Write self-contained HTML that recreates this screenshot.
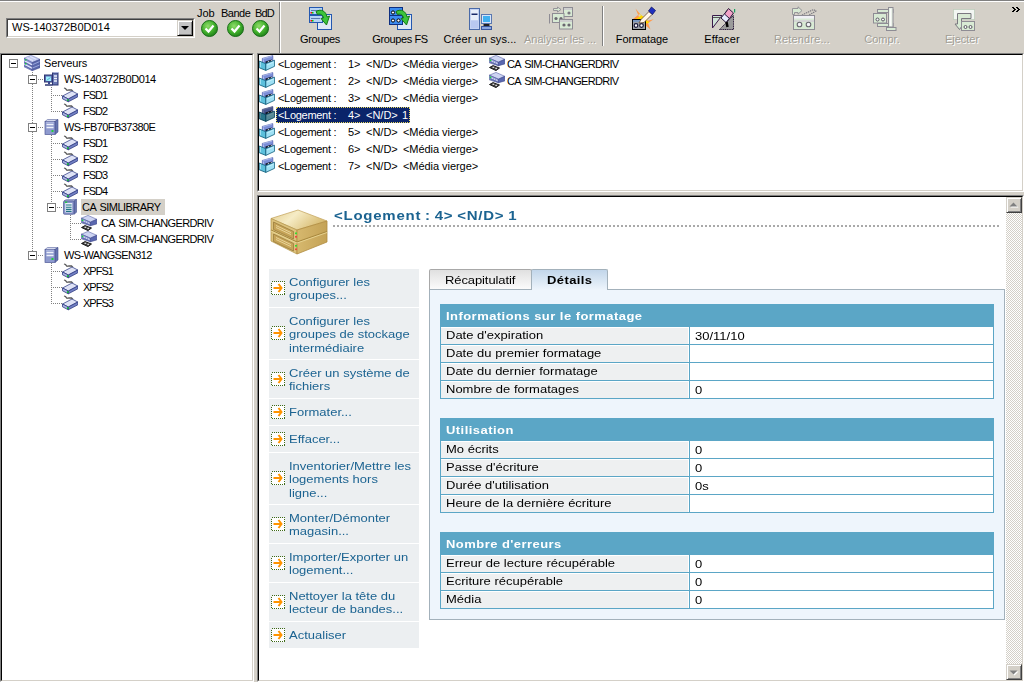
<!DOCTYPE html>
<html><head><meta charset="utf-8">
<style>
*{box-sizing:border-box}
html,body{margin:0;padding:0}
body{width:1024px;height:682px;background:#d4d0c8;position:relative;overflow:hidden;font-family:"Liberation Sans",sans-serif;font-size:11px;color:#000}
.a{position:absolute}
.t{position:absolute;white-space:nowrap;line-height:13px}
.sunk{position:absolute;border-top:1px solid #808080;border-left:1px solid #808080;border-right:1px solid #fff;border-bottom:1px solid #fff}
.sunk>.in{position:absolute;left:0;top:0;right:0;bottom:0;border-top:1px solid #000;border-left:1px solid #000;border-right:1px solid #d4d0c8;border-bottom:1px solid #d4d0c8;background:#fff;overflow:hidden}
.tb{position:absolute;top:33px;letter-spacing:-0.25px;width:100px;text-align:center;line-height:13px}
.dis{color:#a19e96;text-shadow:1px 1px 0 #fff}
.tr{position:absolute;white-space:nowrap;line-height:13px}
.dv{width:1px;background:repeating-linear-gradient(to bottom,#808080 0,#808080 1px,transparent 1px,transparent 2px)}
.dh{height:1px;background:repeating-linear-gradient(to right,#808080 0,#808080 1px,transparent 1px,transparent 2px)}
.mbox{width:9px;height:9px;border:1px solid #808080;background:#fff}
.mbox:after{content:"";position:absolute;left:1px;top:3px;width:5px;height:1px;background:#000}
.btn3{background:#d4d0c8;border-top:1px solid #d4d0c8;border-left:1px solid #d4d0c8;border-right:1px solid #404040;border-bottom:1px solid #404040;box-shadow:inset 1px 1px 0 #fff,inset -1px -1px 0 #808080}
.hd{font-size:15px;font-weight:bold;letter-spacing:0.75px;word-spacing:-1px;color:#1b6391;transform:scaleY(0.85);transform-origin:0 0}
.act{color:#1b6391}
.v.th{font-weight:bold;color:#fff;font-size:13px;letter-spacing:0.45px;transform:scaleY(0.85)}
.v{font-family:"Liberation Sans",sans-serif;font-size:13px;line-height:15px;letter-spacing:0px;transform:scaleY(0.87);transform-origin:0 0}
</style></head>
<body>
<!-- top lines -->
<div class="a" style="left:0;top:0;width:1024px;height:1px;background:#808080"></div>
<div class="a" style="left:0;top:1px;width:1024px;height:1px;background:#fff"></div>

<!-- combo -->
<div class="sunk" style="left:6px;top:18px;width:189px;height:20px">
  <div class="in" style="border-top-color:#404040;border-left-color:#404040">
    <div class="t" style="left:4px;top:1px">WS-140372B0D014</div>
    <div class="a" style="left:169px;top:0;width:16px;height:16px;background:#c4c4c4;border-top:1px solid #d4d0c8;border-left:1px solid #d4d0c8;border-right:1px solid #000;border-bottom:1px solid #000;box-shadow:inset 1px 1px 0 #fff,inset -1px -1px 0 #808080">
      <div class="a" style="left:3px;top:5px;width:0;height:0;border-left:4px solid transparent;border-right:4px solid transparent;border-top:4px solid #000"></div>
    </div>
  </div>
</div>

<!-- status labels -->
<div class="t" style="left:197px;top:7px">Job</div>
<div class="t" style="left:221px;top:7px;letter-spacing:-0.5px">Bande</div>
<div class="t" style="left:255px;top:7px;letter-spacing:-0.8px">BdD</div>
<svg class="a" style="left:201px;top:20px" width="17" height="17" viewBox="0 0 17 17"><defs><radialGradient id="gc" cx="0.4" cy="0.35" r="0.7"><stop offset="0" stop-color="#8fdc6a"/><stop offset="0.6" stop-color="#3fae2a"/><stop offset="1" stop-color="#1d7a18"/></radialGradient></defs><circle cx="8.5" cy="8.5" r="8" fill="url(#gc)" stroke="#1b6e1a" stroke-width="1"/><path d="M4.5 8.5 L7.5 11.5 L12.5 5.5" fill="none" stroke="#fff" stroke-width="2.2"/></svg>
<svg class="a" style="left:227px;top:20px" width="17" height="17" viewBox="0 0 17 17"><circle cx="8.5" cy="8.5" r="8" fill="url(#gc)" stroke="#1b6e1a" stroke-width="1"/><path d="M4.5 8.5 L7.5 11.5 L12.5 5.5" fill="none" stroke="#fff" stroke-width="2.2"/></svg>
<svg class="a" style="left:252px;top:20px" width="17" height="17" viewBox="0 0 17 17"><circle cx="8.5" cy="8.5" r="8" fill="url(#gc)" stroke="#1b6e1a" stroke-width="1"/><path d="M4.5 8.5 L7.5 11.5 L12.5 5.5" fill="none" stroke="#fff" stroke-width="2.2"/></svg>

<!-- toolbar separator -->
<div class="a" style="left:279px;top:2px;width:1px;height:51px;background:#808080"></div>
<div class="a" style="left:280px;top:2px;width:1px;height:51px;background:#fff"></div>
<div class="a" style="left:602px;top:6px;width:1px;height:40px;background:#808080"></div>
<div class="a" style="left:603px;top:6px;width:1px;height:40px;background:#fff"></div>

<!-- toolbar labels -->
<div class="tb" style="left:270px;letter-spacing:-0.3px">Groupes</div>
<div class="tb" style="left:350px;letter-spacing:-0.4px">Groupes FS</div>
<div class="tb" style="left:430px;letter-spacing:0.1px">Créer un sys...</div>
<div class="tb dis" style="left:510px;letter-spacing:0px">Analyser les ...</div>
<div class="tb" style="left:592px;letter-spacing:-0.1px">Formatage</div>
<div class="tb" style="left:672px;letter-spacing:0.1px">Effacer</div>
<div class="tb dis" style="left:752px;letter-spacing:0.15px">Retendre...</div>
<div class="tb dis" style="left:832px;letter-spacing:0px">Compr.</div>
<div class="tb dis" style="left:912px;letter-spacing:0px">Ejecter</div>
<svg class="a" style="left:1012px;top:7px" width="9" height="5" viewBox="0 0 9 5" shape-rendering="crispEdges"><path d="M0 0h2v1h-2zM1 1h2v1h-2zM2 2h2v1h-2zM1 3h2v1h-2zM0 4h2v1h-2z M4 0h2v1h-2zM5 1h2v1h-2zM6 2h2v1h-2zM5 3h2v1h-2zM4 4h2v1h-2z" fill="#000"/></svg>


<!-- tree pane -->
<div class="sunk" style="left:0;top:53px;width:254px;height:629px">
  <div class="in"></div>
</div>

<!-- list pane -->
<div class="sunk" style="left:257px;top:53px;width:767px;height:139px">
  <div class="in"></div>
</div>

<!-- detail pane -->
<div class="sunk" style="left:257px;top:195px;width:767px;height:487px">
  <div class="in"></div>
</div>

<svg width="0" height="0" style="position:absolute">
<defs>
<linearGradient id="gTop" x1="0" y1="0" x2="1" y2="1"><stop offset="0" stop-color="#dfe4f6"/><stop offset="1" stop-color="#9aa6d6"/></linearGradient>
<symbol id="i-srvs" viewBox="0 0 16 16">
 <path d="M0 3.2 L7 0.2 L16 4.3 L8.2 7.6 Z" fill="#c4ccf0" stroke="#6670b0" stroke-width="0.5"/>
 <path d="M0 3.2 L8.2 7.6 L8.2 15.8 L0 11.8 Z" fill="#8c98d4" stroke="#4a5498" stroke-width="0.5"/>
 <path d="M8.2 7.6 L16 4.3 L16 12.7 L8.2 15.8 Z" fill="#5866aa" stroke="#3a4488" stroke-width="0.5"/>
 <path d="M0.5 5.8 L8 9.8 M0.5 9.2 L8 13.2" stroke="#e4e8fc" stroke-width="1.2"/>
 <path d="M0.5 7.3 L8 11.3 M0.5 10.7 L8 14.7" stroke="#4a5498" stroke-width="0.8"/>
 <path d="M8.6 9.6 L15.6 6.6 M8.6 13 L15.6 10" stroke="#9aa6dc" stroke-width="1"/>
 <path d="M3 2.8 L9 5.6 M6 1.5 L12 4.2" stroke="#e8ecfc" stroke-width="0.8"/>
 <rect x="1" y="4.2" width="1.4" height="1.4" fill="#12d030"/><rect x="1" y="8.1" width="1.4" height="1.4" fill="#12d030"/>
</symbol>
<symbol id="i-ws" viewBox="0 0 16 16"><g transform="translate(0,-1.5)">
 <rect x="9.5" y="3.5" width="5.5" height="12" fill="#6a78b4" stroke="#2c3672" stroke-width="1"/>
 <path d="M10 3.5 L11 2.5 H16 L15 3.5 Z" fill="#a8b2dc"/>
 <path d="M11 6.5 H14 M11 9 H14 M11 11.5 H14" stroke="#eef2fc" stroke-width="1.3"/>
 <rect x="1.5" y="5.5" width="8" height="7" fill="#5a68ac" stroke="#2c3672" stroke-width="1"/>
 <rect x="3" y="7" width="5" height="4.5" fill="#9ef0ff"/>
 <path d="M3.5 11 L7.5 8" stroke="#5ab0c8" stroke-width="1"/>
 <path d="M2 15.5 H9.5" stroke="#2c3672" stroke-width="1.5"/><rect x="5" y="12.5" width="2" height="2" fill="#3a4890"/>
</g></symbol>
<symbol id="i-tower" viewBox="0 0 16 16">
 <path d="M2 2.5 L4.5 0.5 L15 0.5 L12 2.5 Z" fill="#d4d9ee" stroke="#5a66a0" stroke-width="0.6"/>
 <path d="M12 2.5 L15 0.5 L15 13 L12 15.5 Z" fill="#6574b0" stroke="#48538f" stroke-width="0.6"/>
 <rect x="2" y="2.5" width="10" height="13" fill="#8e9ace" stroke="#4d5895" stroke-width="0.7"/>
 <path d="M3 3.2 H11" stroke="#c4ccec" stroke-width="0.8"/>
 <path d="M3.5 5.5 H10.5 M3.5 8.5 H10.5" stroke="#eef1fb" stroke-width="1.4"/>
 <rect x="8.5" y="11" width="2" height="2" fill="#1fcf3a"/>
</symbol>
<symbol id="i-drv" viewBox="0 0 16 16">
 <path d="M2 1 L3.5 1.5 L5 3.3 L7 2.8 L9.5 3 L11 4.5" fill="none" stroke="#5a5a5a" stroke-width="1.3"/>
 <path d="M0.5 9 L10 4 L15.8 7 L6.3 12 Z" fill="#dfe3f6" stroke="#3a468c" stroke-width="0.8"/>
 <path d="M0.5 9 L6.3 12 L6.3 14.8 L0.5 11.8 Z" fill="#aab4e2" stroke="#2e3a80" stroke-width="0.8"/>
 <path d="M6.3 12 L15.8 7 L15.8 9.8 L6.3 14.8 Z" fill="#7280c4" stroke="#2e3a80" stroke-width="0.8"/>
 <rect x="5" y="12.2" width="1.6" height="1.8" fill="#10c030"/>
</symbol>
<symbol id="i-lib" viewBox="0 0 16 16">
 <path d="M2 2 L4.5 0.3 L14.5 0.3 L12 2 Z" fill="#c6cdea" stroke="#5a66a0" stroke-width="0.6"/>
 <path d="M12 2 L14.5 0.3 L14.5 13.3 L12 15.3 Z" fill="#6a78b2" stroke="#48538f" stroke-width="0.6"/>
 <rect x="1.5" y="2" width="10.5" height="13.3" rx="1" fill="#8693c8" stroke="#4d5895" stroke-width="0.7"/>
 <rect x="3.3" y="4" width="7" height="9.5" fill="#e8eef8"/>
 <path d="M4 6 H9.6 M4 8.2 H9.6 M4 10.4 H9.6 M4 12.4 H9.6" stroke="#1f7484" stroke-width="1.1"/>
 <rect x="2.8" y="2.6" width="2.4" height="1.3" fill="#1fcf3a"/>
</symbol>
<symbol id="i-chg" viewBox="0 0 16 16">
 <path d="M0.3 3.2 L7 0.4 L15.8 4.3 L9.4 7.2 Z" fill="#cdd4f2" stroke="#5a64a8" stroke-width="0.6"/>
 <path d="M0.3 3.2 L9.4 7.2 L9.4 10.8 L0.3 7.8 Z" fill="#8e9ad2" stroke="#4a5498" stroke-width="0.6"/>
 <path d="M9.4 7.2 L15.8 4.3 L15.8 8.9 L9.4 10.8 Z" fill="#5a68b0" stroke="#3a4488" stroke-width="0.6"/>
 <path d="M2.5 5.8 L8.8 8.6" stroke="#eef0fc" stroke-width="1" stroke-dasharray="1.5 1"/>
 <path d="M1 6.8 L8.8 10" stroke="#4a5498" stroke-width="0.7"/>
 <rect x="0.8" y="4.6" width="1.5" height="1.5" fill="#10e030"/>
 <path d="M0.5 12.5 L4 10.6 L10.5 13 L7 15.6 Z" fill="#3a3a3a" stroke="#111" stroke-width="0.9" stroke-linejoin="round"/>
 <rect x="3.5" y="11.6" width="1.8" height="1.4" fill="#d8d8d8"/><rect x="6.3" y="12.7" width="1.8" height="1.4" fill="#d8d8d8"/>
</symbol>
<symbol id="i-slot" viewBox="0 0 16 16">
 <path d="M3.3 3.4 L13.8 0.6 L14 6 L6.2 8.7 L6.2 12.5 L3.3 11.3 Z" fill="#7c8ed8" stroke="#4a58a8" stroke-width="0.6"/>
 <path d="M4.2 3.6 L13 1.2 M4.5 4.5 L4.5 11" stroke="#b8c4f0" stroke-width="0.8"/>
 <path d="M6.5 6.5 L12.8 4.4 L12.8 6.2 L6.5 8.3 Z" fill="#101828"/>
 <rect x="8.8" y="6.2" width="1.4" height="1.2" fill="#e8e8e8"/><rect x="11.8" y="5.1" width="1.4" height="1.2" fill="#c8c8c8"/>
 <path d="M0.3 6 L6.8 8.7 L6.8 15.4 L0.3 12.8 Z" fill="#5cc0dc" stroke="#0d5a78" stroke-width="0.8"/>
 <path d="M6.8 8.7 L15.6 5.2 L15.6 11.3 L6.8 15.4 Z" fill="#9ee0f4" stroke="#0d5a78" stroke-width="0.8"/>
 <path d="M1.3 7 L1.3 12.2 M8 10 L14.5 7.2" stroke="#c8f2fc" stroke-width="0.8"/>
</symbol>
</defs></svg>

<!-- Groupes -->
<svg class="a" style="left:308px;top:6px" width="24" height="24" viewBox="0 0 24 24">
 <rect x="9.5" y="8.5" width="14" height="15" fill="#dfe8f6" stroke="#2458b0"/>
 <rect x="1.5" y="1.5" width="13" height="7" fill="#b8d4f4" stroke="#2458b0"/>
 <rect x="1.5" y="9.5" width="13" height="7" fill="#b8d4f4" stroke="#2458b0"/>
 <path d="M3 4.5 H12 M3 12.5 H12" stroke="#5a7ab0" stroke-width="1"/>
 <rect x="2.5" y="6" width="1.5" height="1.5" fill="#f00"/><rect x="4" y="6" width="1.5" height="1.5" fill="#0c0"/>
 <rect x="2.5" y="14" width="1.5" height="1.5" fill="#f00"/><rect x="4" y="14" width="1.5" height="1.5" fill="#0c0"/>
 <path d="M8 5.5 C13 2.5 18 5 19 11 L21.5 10 L18.5 19 L13 12.5 L15.5 12 C15 8.5 12 7.5 9.5 8.5 Z" fill="#3cc43c" stroke="#157a15" stroke-width="1"/>
</svg>
<!-- Groupes FS -->
<svg class="a" style="left:388px;top:6px" width="24" height="24" viewBox="0 0 24 24">
 <rect x="9.5" y="8.5" width="14" height="15" fill="#dfe8f6" stroke="#2458b0"/>
 <rect x="1.5" y="1.5" width="13" height="8" fill="#3c8cf0" stroke="#0e2f80"/>
 <rect x="1.5" y="9.5" width="13" height="9" fill="#3c8cf0" stroke="#0e2f80"/>
 <circle cx="5" cy="6.5" r="1.6" fill="#fff" stroke="#000"/><circle cx="10.5" cy="6.5" r="1.6" fill="#fff" stroke="#000"/>
 <circle cx="5" cy="14.5" r="1.6" fill="#fff" stroke="#000"/><circle cx="10.5" cy="14.5" r="1.6" fill="#fff" stroke="#000"/>
 <path d="M8 5.5 C13 2.5 18 5 19 11 L21.5 10 L18.5 19 L13 12.5 L15.5 12 C15 8.5 12 7.5 9.5 8.5 Z" fill="#3cc43c" stroke="#157a15" stroke-width="1"/>
</svg>
<!-- Créer -->
<svg class="a" style="left:468px;top:6px" width="24" height="24" viewBox="0 0 24 24">
 <rect x="1.5" y="2.5" width="10" height="21" fill="#c4d2f2" stroke="#4a6aa8"/>
 <rect x="3" y="4" width="7" height="10" fill="#e8eefa"/>
 <rect x="3.5" y="7.5" width="6" height="1.5" fill="#1a2a6a"/>
 <rect x="3" y="15" width="7" height="7" fill="#b8c8f0"/>
 <rect x="13.5" y="8.5" width="10" height="9" fill="#d8e4f8" stroke="#5a78b0"/>
 <rect x="15" y="10" width="7" height="6" fill="#40b0f0"/>
 <rect x="15.5" y="18" width="6" height="2" fill="#222"/>
 <rect x="13.5" y="20.5" width="10" height="3" fill="#8aa8e0" stroke="#3a58a0"/>
</svg>
<!-- Analyser (disabled) -->
<svg class="a" style="left:548px;top:6px" width="26" height="24" viewBox="0 0 26 24">
 <rect x="15.5" y="1.5" width="9" height="9" fill="#d8ead4" stroke="#8e8c94"/>
 <path d="M16 3 H24" stroke="#c0a8c8" stroke-width="0.8"/>
 <circle cx="21" cy="7" r="1.6" fill="#7a7880"/>
 <rect x="4.5" y="7.5" width="11.5" height="9" fill="#d8ead4" stroke="#8e8c94"/>
 <circle cx="8" cy="12.5" r="1.6" fill="#6a6870"/><circle cx="13" cy="12.5" r="1.6" fill="#6a6870"/>
 <rect x="11.5" y="13.5" width="13" height="9.5" fill="#d8ead4" stroke="#8e8c94"/>
 <path d="M12 15 H24" stroke="#c0a8c8" stroke-width="0.8"/>
 <circle cx="16" cy="19" r="1.6" fill="#6a6870"/><circle cx="21" cy="19" r="1.6" fill="#6a6870"/>
 <path d="M5.5 2.5 H9.5 V1 L13 3.5 L9.5 6 V4.5 H5.5 Z" fill="#d8ead4" stroke="#8e8c94" stroke-width="0.9"/>
 <path d="M1.5 8 V17.5" stroke="#8e8c94" stroke-width="1"/>
</svg>
<!-- Formatage -->
<svg class="a" style="left:632px;top:6px" width="24" height="24" viewBox="0 0 24 24">
 <path d="M3.5 2.5 L8 8 L6 9 L1 13 L7 13.5 L10 16 L14 15 L21.8 13.2 L16 17 L18.5 23.6 L13 19 L10 18 Z" fill="#ff9a50"/>
 <path d="M5.5 6 L9 9.5 L4 13 L9 14 L13 17.5 L17.5 17 L14.5 13.5 L16 10 L11 10.5 Z" fill="#ffd800"/>
 <rect x="0.5" y="13.5" width="13" height="10" fill="#9ca0a4" stroke="#000"/>
 <rect x="1" y="14" width="12" height="2" fill="#7a98c0"/>
 <circle cx="4" cy="19.5" r="1.8" fill="#fff" stroke="#1a1a3a" stroke-width="1.2"/><circle cx="9.5" cy="19.5" r="1.8" fill="#fff" stroke="#1a1a3a" stroke-width="1.2"/>
 <path d="M7 17 L9 13.5 L17 5.5 L20 8.5 L12 16.5 Z" fill="#fff6ea" stroke="#6a4a2a" stroke-width="0.8"/>
 <path d="M16.5 5 L19.5 1 L23.5 4.5 L20.5 8.5 Z" fill="#2030c0" stroke="#10186a" stroke-width="0.8"/>
</svg>
<!-- Effacer -->
<svg class="a" style="left:710px;top:6px" width="26" height="24" viewBox="0 0 26 24">
 <path d="M2.5 9.5 H12 L2.5 22 Z" fill="#d0e4d8" stroke="#3a1a4a"/>
 <path d="M3 11.5 H11" stroke="#555"/>
 <path d="M9.5 23.5 L23.5 23.5 V9.5 Z" fill="#9a9a9a" stroke="#2a1a3a" stroke-dasharray="1.2 0.6"/>
 <path d="M11 12 L17.5 4 L22.5 8.5 L16 16.5 Z" fill="#e6ecff" stroke="#2a1a3a"/>
 <path d="M14.5 8 L18.5 2.5 L23.5 7 L19.5 12.5 Z" fill="#f2a2c8" stroke="#2a1a3a"/>
 <path d="M16.5 16 L17.5 21" stroke="#000" stroke-width="2.5"/>
 <rect x="24" y="3" width="1.2" height="3.5" fill="#18a060"/>
</svg>
<!-- Retendre (disabled) -->
<svg class="a" style="left:790px;top:6px" width="27" height="24" viewBox="0 0 27 24">
 <path d="M2.5 2.5 H8 V0.8 L12 4.5 L8 8.2 V6.5 H4.5 V8.5 H2.5 Z" fill="#d8ead4" stroke="#8e8c94" stroke-width="0.9"/>
 <path d="M12 9 L23.5 3.5 L26 5 L19 9" fill="none" stroke="#7a7880" stroke-width="1.1" stroke-dasharray="1.4 0.8"/>
 <rect x="3.5" y="9.5" width="21" height="14" fill="#d8ead4" stroke="#8e8c94"/>
 <rect x="4" y="10" width="20" height="2.5" fill="#f0f0f6"/>
 <path d="M4 15 H24" stroke="#d0b8d8" stroke-width="0.8"/>
 <circle cx="9.5" cy="18.5" r="2.3" fill="#f4f4f8" stroke="#6a6870" stroke-width="1.1"/><circle cx="18.5" cy="18.5" r="2.3" fill="#f4f4f8" stroke="#6a6870" stroke-width="1.1"/>
</svg>
<!-- Compr (disabled) -->
<svg class="a" style="left:870px;top:6px" width="27" height="26" viewBox="0 0 27 26">
 <rect x="7.5" y="3.5" width="15.5" height="3" fill="#d8ead4" stroke="#8e8c94"/>
 <rect x="7.5" y="17.5" width="15.5" height="3" fill="#d8ead4" stroke="#8e8c94"/>
 <rect x="3.5" y="7.5" width="13" height="9.5" fill="#d8ead4" stroke="#8e8c94"/>
 <circle cx="7.5" cy="13.5" r="1.5" fill="#f4f4f8" stroke="#5a5860"/><circle cx="13" cy="13.5" r="1.5" fill="#f4f4f8" stroke="#5a5860"/>
 <rect x="18.5" y="1.5" width="4.5" height="19.5" fill="#e8f0e6" stroke="#8e8c94"/>
 <path d="M20.7 3 V20" stroke="#fff" stroke-width="1"/>
 <rect x="16.5" y="21.5" width="9.5" height="3" fill="#d8ead4" stroke="#8e8c94"/>
</svg>
<!-- Ejecter (disabled) -->
<svg class="a" style="left:952px;top:7px" width="24" height="24" viewBox="0 0 24 24">
 <rect x="1.5" y="2.5" width="21" height="10" fill="#f2f6f2" stroke="#a8c0a8" stroke-dasharray="1 1"/>
 <path d="M5.5 17 V6.5 H19 V11.5 H9.5 V17 H11.5 L7.5 22.5 L3 17 Z" fill="#d8ead4" stroke="#7a7880"/>
 <rect x="9.5" y="14.5" width="13" height="9" fill="#d8ead4" stroke="#8e8c94"/>
 <circle cx="13.5" cy="20" r="1.5" fill="#f4f4f8" stroke="#5a5860"/><circle cx="18.5" cy="20" r="1.5" fill="#f4f4f8" stroke="#5a5860"/>
</svg>

<div class="a dv" style="left:32px;top:72px;height:184px"></div>
<div class="a dv" style="left:51px;top:87px;height:25px"></div>
<div class="a dv" style="left:51px;top:135px;height:73px"></div>
<div class="a dv" style="left:51px;top:263px;height:41px"></div>
<div class="a dv" style="left:70px;top:215px;height:25px"></div>
<div class="a dh" style="left:32px;top:79px;width:11px"></div>
<div class="a dh" style="left:51px;top:95px;width:11px"></div>
<div class="a dh" style="left:51px;top:111px;width:11px"></div>
<div class="a dh" style="left:32px;top:127px;width:11px"></div>
<div class="a dh" style="left:51px;top:143px;width:11px"></div>
<div class="a dh" style="left:51px;top:159px;width:11px"></div>
<div class="a dh" style="left:51px;top:175px;width:11px"></div>
<div class="a dh" style="left:51px;top:191px;width:11px"></div>
<div class="a dh" style="left:51px;top:207px;width:11px"></div>
<div class="a dh" style="left:70px;top:223px;width:11px"></div>
<div class="a dh" style="left:70px;top:239px;width:11px"></div>
<div class="a dh" style="left:32px;top:255px;width:11px"></div>
<div class="a dh" style="left:51px;top:271px;width:11px"></div>
<div class="a dh" style="left:51px;top:287px;width:11px"></div>
<div class="a dh" style="left:51px;top:303px;width:11px"></div>
<div class="a mbox" style="left:9px;top:59px"></div>
<svg class="a" style="left:24px;top:55px" width="16" height="16"><use href="#i-srvs"/></svg>
<div class="tr" style="left:44px;top:57px;letter-spacing:-0.1px;word-spacing:0px">Serveurs</div>
<div class="a mbox" style="left:28px;top:75px"></div>
<svg class="a" style="left:43px;top:71px" width="16" height="16"><use href="#i-ws"/></svg>
<div class="tr" style="left:64px;top:73px;letter-spacing:-0.4px;word-spacing:0px">WS-140372B0D014</div>
<svg class="a" style="left:62px;top:87px" width="16" height="16"><use href="#i-drv"/></svg>
<div class="tr" style="left:83px;top:89px;letter-spacing:-1.0px;word-spacing:0px">FSD1</div>
<svg class="a" style="left:62px;top:103px" width="16" height="16"><use href="#i-drv"/></svg>
<div class="tr" style="left:83px;top:105px;letter-spacing:-1.0px;word-spacing:0px">FSD2</div>
<div class="a mbox" style="left:28px;top:123px"></div>
<svg class="a" style="left:43px;top:119px" width="16" height="16"><use href="#i-tower"/></svg>
<div class="tr" style="left:64px;top:121px;letter-spacing:-0.55px;word-spacing:0px">WS-FB70FB37380E</div>
<svg class="a" style="left:62px;top:135px" width="16" height="16"><use href="#i-drv"/></svg>
<div class="tr" style="left:83px;top:137px;letter-spacing:-1.0px;word-spacing:0px">FSD1</div>
<svg class="a" style="left:62px;top:151px" width="16" height="16"><use href="#i-drv"/></svg>
<div class="tr" style="left:83px;top:153px;letter-spacing:-1.0px;word-spacing:0px">FSD2</div>
<svg class="a" style="left:62px;top:167px" width="16" height="16"><use href="#i-drv"/></svg>
<div class="tr" style="left:83px;top:169px;letter-spacing:-1.0px;word-spacing:0px">FSD3</div>
<svg class="a" style="left:62px;top:183px" width="16" height="16"><use href="#i-drv"/></svg>
<div class="tr" style="left:83px;top:185px;letter-spacing:-1.0px;word-spacing:0px">FSD4</div>
<div class="a mbox" style="left:47px;top:203px"></div>
<svg class="a" style="left:62px;top:199px" width="16" height="16"><use href="#i-lib"/></svg>
<div class="a" style="left:81px;top:199px;width:84px;height:16px;background:#d4d0c8"></div>
<div class="tr" style="left:82px;top:201px;letter-spacing:-0.55px;word-spacing:1.5px">CA SIMLIBRARY</div>
<svg class="a" style="left:81px;top:215px" width="16" height="16"><use href="#i-chg"/></svg>
<div class="tr" style="left:101px;top:217px;letter-spacing:-0.64px;word-spacing:1.5px">CA SIM-CHANGERDRIV</div>
<svg class="a" style="left:81px;top:231px" width="16" height="16"><use href="#i-chg"/></svg>
<div class="tr" style="left:101px;top:233px;letter-spacing:-0.64px;word-spacing:1.5px">CA SIM-CHANGERDRIV</div>
<div class="a mbox" style="left:28px;top:251px"></div>
<svg class="a" style="left:43px;top:247px" width="16" height="16"><use href="#i-tower"/></svg>
<div class="tr" style="left:64px;top:249px;letter-spacing:-0.66px;word-spacing:0px">WS-WANGSEN312</div>
<svg class="a" style="left:62px;top:263px" width="16" height="16"><use href="#i-drv"/></svg>
<div class="tr" style="left:83px;top:265px;letter-spacing:-1.0px;word-spacing:0px">XPFS1</div>
<svg class="a" style="left:62px;top:279px" width="16" height="16"><use href="#i-drv"/></svg>
<div class="tr" style="left:83px;top:281px;letter-spacing:-1.0px;word-spacing:0px">XPFS2</div>
<svg class="a" style="left:62px;top:295px" width="16" height="16"><use href="#i-drv"/></svg>
<div class="tr" style="left:83px;top:297px;letter-spacing:-1.0px;word-spacing:0px">XPFS3</div>
<svg class="a" style="left:259px;top:55px;" width="16" height="16"><use href="#i-slot"/></svg>
<div class="tr" style="left:278px;top:58px;letter-spacing:-0.3px">&lt;Logement :</div>
<div class="tr" style="left:348px;top:58px;">1&gt;</div>
<div class="tr" style="left:366px;top:58px;">&lt;N/D&gt;</div>
<div class="tr" style="left:403px;top:58px;letter-spacing:-0.05px">&lt;Média vierge&gt;</div>
<svg class="a" style="left:489px;top:55px" width="16" height="16"><use href="#i-chg"/></svg>
<div class="tr" style="left:507px;top:58px;letter-spacing:-0.68px;word-spacing:1.5px">CA SIM-CHANGERDRIV</div>
<svg class="a" style="left:259px;top:72px;" width="16" height="16"><use href="#i-slot"/></svg>
<div class="tr" style="left:278px;top:75px;letter-spacing:-0.3px">&lt;Logement :</div>
<div class="tr" style="left:348px;top:75px;">2&gt;</div>
<div class="tr" style="left:366px;top:75px;">&lt;N/D&gt;</div>
<div class="tr" style="left:403px;top:75px;letter-spacing:-0.05px">&lt;Média vierge&gt;</div>
<svg class="a" style="left:489px;top:72px" width="16" height="16"><use href="#i-chg"/></svg>
<div class="tr" style="left:507px;top:75px;letter-spacing:-0.68px;word-spacing:1.5px">CA SIM-CHANGERDRIV</div>
<svg class="a" style="left:259px;top:89px;" width="16" height="16"><use href="#i-slot"/></svg>
<div class="tr" style="left:278px;top:92px;letter-spacing:-0.3px">&lt;Logement :</div>
<div class="tr" style="left:348px;top:92px;">3&gt;</div>
<div class="tr" style="left:366px;top:92px;">&lt;N/D&gt;</div>
<div class="tr" style="left:403px;top:92px;letter-spacing:-0.05px">&lt;Média vierge&gt;</div>
<svg class="a" style="left:259px;top:106px;filter:brightness(0.6) saturate(1.3)" width="16" height="16"><use href="#i-slot"/></svg>
<div class="a" style="left:276px;top:107px;width:134px;height:16px;background:#0a246a;outline:1px dotted #e8d860;outline-offset:-1px"></div>
<div class="tr" style="left:278px;top:109px;color:#fff;letter-spacing:-0.3px">&lt;Logement :</div>
<div class="tr" style="left:348px;top:109px;color:#fff;">4&gt;</div>
<div class="tr" style="left:366px;top:109px;color:#fff;">&lt;N/D&gt;</div>
<div class="tr" style="left:402px;top:109px;color:#fff;">1</div>
<svg class="a" style="left:259px;top:123px;" width="16" height="16"><use href="#i-slot"/></svg>
<div class="tr" style="left:278px;top:126px;letter-spacing:-0.3px">&lt;Logement :</div>
<div class="tr" style="left:348px;top:126px;">5&gt;</div>
<div class="tr" style="left:366px;top:126px;">&lt;N/D&gt;</div>
<div class="tr" style="left:403px;top:126px;letter-spacing:-0.05px">&lt;Média vierge&gt;</div>
<svg class="a" style="left:259px;top:140px;" width="16" height="16"><use href="#i-slot"/></svg>
<div class="tr" style="left:278px;top:143px;letter-spacing:-0.3px">&lt;Logement :</div>
<div class="tr" style="left:348px;top:143px;">6&gt;</div>
<div class="tr" style="left:366px;top:143px;">&lt;N/D&gt;</div>
<div class="tr" style="left:403px;top:143px;letter-spacing:-0.05px">&lt;Média vierge&gt;</div>
<svg class="a" style="left:259px;top:157px;" width="16" height="16"><use href="#i-slot"/></svg>
<div class="tr" style="left:278px;top:160px;letter-spacing:-0.3px">&lt;Logement :</div>
<div class="tr" style="left:348px;top:160px;">7&gt;</div>
<div class="tr" style="left:366px;top:160px;">&lt;N/D&gt;</div>
<div class="tr" style="left:403px;top:160px;letter-spacing:-0.05px">&lt;Média vierge&gt;</div>
<div class="a" style="left:1006px;top:213px;width:16px;height:451px;background-color:#fff;background-image:linear-gradient(45deg,#d4d0c8 25%,transparent 25%,transparent 75%,#d4d0c8 75%),linear-gradient(45deg,#d4d0c8 25%,transparent 25%,transparent 75%,#d4d0c8 75%);background-size:2px 2px;background-position:0 0,1px 1px"></div>
<div class="a btn3" style="left:1006px;top:197px;width:16px;height:16px"><svg class="a" style="left:-1px;top:-1px" width="16" height="16" viewBox="0 0 16 16"><polygon points="3.5,9.5 7.5,5.5 11.5,9.5" fill="#fff" transform="translate(1,1)"/><polygon points="3.5,9.5 7.5,5.5 11.5,9.5" fill="#808080"/></svg></div>
<div class="a btn3" style="left:1006px;top:664px;width:16px;height:16px"><svg class="a" style="left:-1px;top:-1px" width="16" height="16" viewBox="0 0 16 16"><polygon points="3.5,6.5 7.5,10.5 11.5,6.5" fill="#fff" transform="translate(1,1)"/><polygon points="3.5,6.5 7.5,10.5 11.5,6.5" fill="#808080"/></svg></div>
<svg class="a" style="left:270px;top:209px" width="58" height="46" viewBox="0 0 58 46">
<defs><linearGradient id="gt" x1="0" y1="0" x2="1" y2="0.4"><stop offset="0" stop-color="#e2cc8c"/><stop offset="0.45" stop-color="#f6ecc6"/><stop offset="1" stop-color="#d8bc72"/></linearGradient>
<linearGradient id="gr" x1="0" y1="0" x2="1" y2="0"><stop offset="0" stop-color="#d6b86e"/><stop offset="1" stop-color="#c4a255"/></linearGradient></defs>
<path d="M1 9.5 L28 1 L57 12 L27 21 Z" fill="url(#gt)" stroke="#c8aa66" stroke-width="0.8"/>
<path d="M1 9.5 L27 21 L27 45 L1 32 Z" fill="#dcc27c" stroke="#b89a52" stroke-width="0.8"/>
<path d="M27 21 L57 12 L57 33 L27 45 Z" fill="url(#gr)" stroke="#b08c40" stroke-width="0.8"/>
<path d="M1 21 L27 33 L57 22.5" fill="none" stroke="#a8883e" stroke-width="1.2"/>
<path d="M1 22 L27 34 L57 23.5" fill="none" stroke="#eedc9c" stroke-width="0.8"/>
<path d="M3.5 13 L23.5 22.5 L23.5 30 L3.5 20.5 Z" fill="#c6a458" stroke="#9a7c3c" stroke-width="0.8"/>
<path d="M3.5 25 L23.5 34.5 L23.5 42 L3.5 32.5 Z" fill="#c6a458" stroke="#9a7c3c" stroke-width="0.8"/>
<path d="M6 16.5 L21 23.6 M6 18.5 L21 25.6 M6 28.5 L21 35.6 M6 30.5 L21 37.6" stroke="#ecd89e" stroke-width="0.9"/>
<rect x="25" y="23.5" width="2" height="1.6" fill="#3d3"/><rect x="25" y="27" width="2" height="1.6" fill="#e44"/>
<rect x="25" y="36" width="2" height="1.6" fill="#3d3"/><rect x="25" y="39.5" width="2" height="1.6" fill="#e44"/>
</svg>
<div class="t hd" style="left:334px;top:210px">&lt;Logement : 4&gt; &lt;N/D&gt; 1</div>
<div class="a" style="left:333px;top:225px;width:668px;height:2px;background:repeating-linear-gradient(to right,#a9a9a9 0,#a9a9a9 2px,transparent 2px,transparent 4px)"></div>
<div class="a" style="left:269px;top:269px;width:150px;height:38px;background:#eceff1"></div>
<svg class="a" style="left:271px;top:281px" width="14" height="14" viewBox="0 0 14 14"><rect x="0.5" y="0.5" width="13" height="13" fill="#fff" stroke="#3f6a18" stroke-dasharray="1 1" shape-rendering="crispEdges"/><path d="M2.5 7 H9.5 M7.5 3 L10.5 7 L7.5 11" fill="none" stroke="#ff9400" stroke-width="2"/></svg>
<div class="t v act" style="left:289px;top:276px">Configurer les<br>groupes...</div>
<div class="a" style="left:269px;top:308px;width:150px;height:51px;background:#eceff1"></div>
<svg class="a" style="left:271px;top:326px" width="14" height="14" viewBox="0 0 14 14"><rect x="0.5" y="0.5" width="13" height="13" fill="#fff" stroke="#3f6a18" stroke-dasharray="1 1" shape-rendering="crispEdges"/><path d="M2.5 7 H9.5 M7.5 3 L10.5 7 L7.5 11" fill="none" stroke="#ff9400" stroke-width="2"/></svg>
<div class="t v act" style="left:289px;top:315px">Configurer les<br>groupes de stockage<br>intermédiaire</div>
<div class="a" style="left:269px;top:360px;width:150px;height:38px;background:#eceff1"></div>
<svg class="a" style="left:271px;top:372px" width="14" height="14" viewBox="0 0 14 14"><rect x="0.5" y="0.5" width="13" height="13" fill="#fff" stroke="#3f6a18" stroke-dasharray="1 1" shape-rendering="crispEdges"/><path d="M2.5 7 H9.5 M7.5 3 L10.5 7 L7.5 11" fill="none" stroke="#ff9400" stroke-width="2"/></svg>
<div class="t v act" style="left:289px;top:367px">Créer un système de<br>fichiers</div>
<div class="a" style="left:269px;top:399px;width:150px;height:26px;background:#eceff1"></div>
<svg class="a" style="left:271px;top:405px" width="14" height="14" viewBox="0 0 14 14"><rect x="0.5" y="0.5" width="13" height="13" fill="#fff" stroke="#3f6a18" stroke-dasharray="1 1" shape-rendering="crispEdges"/><path d="M2.5 7 H9.5 M7.5 3 L10.5 7 L7.5 11" fill="none" stroke="#ff9400" stroke-width="2"/></svg>
<div class="t v act" style="left:289px;top:406px">Formater...</div>
<div class="a" style="left:269px;top:426px;width:150px;height:26px;background:#eceff1"></div>
<svg class="a" style="left:271px;top:432px" width="14" height="14" viewBox="0 0 14 14"><rect x="0.5" y="0.5" width="13" height="13" fill="#fff" stroke="#3f6a18" stroke-dasharray="1 1" shape-rendering="crispEdges"/><path d="M2.5 7 H9.5 M7.5 3 L10.5 7 L7.5 11" fill="none" stroke="#ff9400" stroke-width="2"/></svg>
<div class="t v act" style="left:289px;top:433px">Effacer...</div>
<div class="a" style="left:269px;top:453px;width:150px;height:51px;background:#eceff1"></div>
<svg class="a" style="left:271px;top:471px" width="14" height="14" viewBox="0 0 14 14"><rect x="0.5" y="0.5" width="13" height="13" fill="#fff" stroke="#3f6a18" stroke-dasharray="1 1" shape-rendering="crispEdges"/><path d="M2.5 7 H9.5 M7.5 3 L10.5 7 L7.5 11" fill="none" stroke="#ff9400" stroke-width="2"/></svg>
<div class="t v act" style="left:289px;top:460px">Inventorier/Mettre les<br>logements hors<br>ligne...</div>
<div class="a" style="left:269px;top:505px;width:150px;height:38px;background:#eceff1"></div>
<svg class="a" style="left:271px;top:517px" width="14" height="14" viewBox="0 0 14 14"><rect x="0.5" y="0.5" width="13" height="13" fill="#fff" stroke="#3f6a18" stroke-dasharray="1 1" shape-rendering="crispEdges"/><path d="M2.5 7 H9.5 M7.5 3 L10.5 7 L7.5 11" fill="none" stroke="#ff9400" stroke-width="2"/></svg>
<div class="t v act" style="left:289px;top:512px">Monter/Démonter<br>magasin...</div>
<div class="a" style="left:269px;top:544px;width:150px;height:38px;background:#eceff1"></div>
<svg class="a" style="left:271px;top:556px" width="14" height="14" viewBox="0 0 14 14"><rect x="0.5" y="0.5" width="13" height="13" fill="#fff" stroke="#3f6a18" stroke-dasharray="1 1" shape-rendering="crispEdges"/><path d="M2.5 7 H9.5 M7.5 3 L10.5 7 L7.5 11" fill="none" stroke="#ff9400" stroke-width="2"/></svg>
<div class="t v act" style="left:289px;top:551px">Importer/Exporter un<br>logement...</div>
<div class="a" style="left:269px;top:583px;width:150px;height:38px;background:#eceff1"></div>
<svg class="a" style="left:271px;top:595px" width="14" height="14" viewBox="0 0 14 14"><rect x="0.5" y="0.5" width="13" height="13" fill="#fff" stroke="#3f6a18" stroke-dasharray="1 1" shape-rendering="crispEdges"/><path d="M2.5 7 H9.5 M7.5 3 L10.5 7 L7.5 11" fill="none" stroke="#ff9400" stroke-width="2"/></svg>
<div class="t v act" style="left:289px;top:590px">Nettoyer la tête du<br>lecteur de bandes...</div>
<div class="a" style="left:269px;top:622px;width:150px;height:26px;background:#eceff1"></div>
<svg class="a" style="left:271px;top:628px" width="14" height="14" viewBox="0 0 14 14"><rect x="0.5" y="0.5" width="13" height="13" fill="#fff" stroke="#3f6a18" stroke-dasharray="1 1" shape-rendering="crispEdges"/><path d="M2.5 7 H9.5 M7.5 3 L10.5 7 L7.5 11" fill="none" stroke="#ff9400" stroke-width="2"/></svg>
<div class="t v act" style="left:289px;top:629px">Actualiser</div>
<div class="a" style="left:429px;top:289px;width:576px;height:331px;background:#eef5fc;border:1px solid #a3b1bb"></div>
<div class="a" style="left:429px;top:269px;width:103px;height:21px;border:1px solid #a8a8a8;border-bottom:1px solid #a3b1bb;border-radius:2px 2px 0 0;background:linear-gradient(#e0e0e0,#fbfbfb)"></div>
<div class="a" style="left:531px;top:269px;width:77px;height:21px;border:1px solid #a3b1bb;border-bottom:none;border-radius:2px 2px 0 0;background:linear-gradient(#c2d6ea,#eef5fc)"></div>
<div class="t v" style="left:445px;top:274px;letter-spacing:-0.1px">Récapitulatif</div>
<div class="t v" style="left:547px;top:274px;font-weight:bold;letter-spacing:0.4px">Détails</div>
<div class="a" style="left:440px;top:304px;width:554px;height:22px;background:#5ba6c6"></div>
<div class="t v th" style="left:446px;top:310px">Informations sur le formatage</div>
<div class="a" style="left:440px;top:326px;width:554px;height:73px;background:#5ba6c6"></div>
<div class="a" style="left:441px;top:327px;width:248px;height:17px;background:#eef0f1;border-top:1px solid #fff;border-right:1px solid #fff"></div>
<div class="a" style="left:690px;top:327px;width:303px;height:17px;background:#fff"></div>
<div class="t v tl" style="left:446px;top:329px">Date d'expiration</div>
<div class="t v tl" style="left:695px;top:330px">30/11/10</div>
<div class="a" style="left:441px;top:345px;width:248px;height:17px;background:#eef0f1;border-top:1px solid #fff;border-right:1px solid #fff"></div>
<div class="a" style="left:690px;top:345px;width:303px;height:17px;background:#fff"></div>
<div class="t v tl" style="left:446px;top:347px">Date du premier formatage</div>
<div class="a" style="left:441px;top:363px;width:248px;height:17px;background:#eef0f1;border-top:1px solid #fff;border-right:1px solid #fff"></div>
<div class="a" style="left:690px;top:363px;width:303px;height:17px;background:#fff"></div>
<div class="t v tl" style="left:446px;top:365px">Date du dernier formatage</div>
<div class="a" style="left:441px;top:381px;width:248px;height:17px;background:#eef0f1;border-top:1px solid #fff;border-right:1px solid #fff"></div>
<div class="a" style="left:690px;top:381px;width:303px;height:17px;background:#fff"></div>
<div class="t v tl" style="left:446px;top:383px">Nombre de formatages</div>
<div class="t v tl" style="left:695px;top:384px">0</div>
<div class="a" style="left:440px;top:418px;width:554px;height:22px;background:#5ba6c6"></div>
<div class="t v th" style="left:446px;top:424px">Utilisation</div>
<div class="a" style="left:440px;top:440px;width:554px;height:73px;background:#5ba6c6"></div>
<div class="a" style="left:441px;top:441px;width:248px;height:17px;background:#eef0f1;border-top:1px solid #fff;border-right:1px solid #fff"></div>
<div class="a" style="left:690px;top:441px;width:303px;height:17px;background:#fff"></div>
<div class="t v tl" style="left:446px;top:443px">Mo écrits</div>
<div class="t v tl" style="left:695px;top:444px">0</div>
<div class="a" style="left:441px;top:459px;width:248px;height:17px;background:#eef0f1;border-top:1px solid #fff;border-right:1px solid #fff"></div>
<div class="a" style="left:690px;top:459px;width:303px;height:17px;background:#fff"></div>
<div class="t v tl" style="left:446px;top:461px">Passe d'écriture</div>
<div class="t v tl" style="left:695px;top:462px">0</div>
<div class="a" style="left:441px;top:477px;width:248px;height:17px;background:#eef0f1;border-top:1px solid #fff;border-right:1px solid #fff"></div>
<div class="a" style="left:690px;top:477px;width:303px;height:17px;background:#fff"></div>
<div class="t v tl" style="left:446px;top:479px">Durée d'utilisation</div>
<div class="t v tl" style="left:695px;top:480px">0s</div>
<div class="a" style="left:441px;top:495px;width:248px;height:17px;background:#eef0f1;border-top:1px solid #fff;border-right:1px solid #fff"></div>
<div class="a" style="left:690px;top:495px;width:303px;height:17px;background:#fff"></div>
<div class="t v tl" style="left:446px;top:497px">Heure de la dernière écriture</div>
<div class="a" style="left:440px;top:532px;width:554px;height:22px;background:#5ba6c6"></div>
<div class="t v th" style="left:446px;top:538px">Nombre d'erreurs</div>
<div class="a" style="left:440px;top:554px;width:554px;height:55px;background:#5ba6c6"></div>
<div class="a" style="left:441px;top:555px;width:248px;height:17px;background:#eef0f1;border-top:1px solid #fff;border-right:1px solid #fff"></div>
<div class="a" style="left:690px;top:555px;width:303px;height:17px;background:#fff"></div>
<div class="t v tl" style="left:446px;top:557px">Erreur de lecture récupérable</div>
<div class="t v tl" style="left:695px;top:558px">0</div>
<div class="a" style="left:441px;top:573px;width:248px;height:17px;background:#eef0f1;border-top:1px solid #fff;border-right:1px solid #fff"></div>
<div class="a" style="left:690px;top:573px;width:303px;height:17px;background:#fff"></div>
<div class="t v tl" style="left:446px;top:575px">Ecriture récupérable</div>
<div class="t v tl" style="left:695px;top:576px">0</div>
<div class="a" style="left:441px;top:591px;width:248px;height:17px;background:#eef0f1;border-top:1px solid #fff;border-right:1px solid #fff"></div>
<div class="a" style="left:690px;top:591px;width:303px;height:17px;background:#fff"></div>
<div class="t v tl" style="left:446px;top:593px">Média</div>
<div class="t v tl" style="left:695px;top:594px">0</div>
</body></html>
